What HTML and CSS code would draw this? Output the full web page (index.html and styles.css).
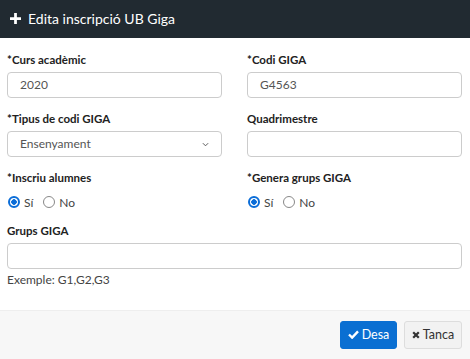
FILE: index.html
```html
<!DOCTYPE html>
<html>
  <head>
    <meta charset='utf-8'/>
    <link rel="stylesheet" href="styles.css">
  </head>
  <body>
    <div class='modal'>
      <div class='modal-header'>
        <svg class='icon-plus' viewBox='0 0 12 12' width='11' height='11'><path d='M4.5 0h3v4.5H12v3H7.5V12h-3V7.5H0v-3h4.5z' fill='#fff'/></svg>
        <span>Edita inscripció UB Giga</span>
      </div>

      <div class='modal-body'>
        <div class='row'>
          <div class='field'>
            <label>*Curs acadèmic</label>
            <div class='input'>2020</div>
          </div>
          <div class='field'>
            <label>*Codi GIGA</label>
            <div class='input'>G4563</div>
          </div>
        </div>

        <div class='row'>
          <div class='field'>
            <label>*Tipus de codi GIGA</label>
            <div class='input select'>
              <span>Ensenyament</span>
              <svg viewBox='0 0 8 5' width='7' height='5'><path d='M1 1l3 3 3-3' fill='none' stroke='#555' stroke-width='1.1'/></svg>
            </div>
          </div>
          <div class='field'>
            <label>Quadrimestre</label>
            <div class='input'></div>
          </div>
        </div>

        <div class='row'>
          <div class='field radio-field'>
            <label>*Inscriu alumnes</label>
            <div class='radios'>
              <span class='radio checked'></span><span class='radio-label'>Sí</span>
              <span class='radio'></span><span class='radio-label'>No</span>
            </div>
          </div>
          <div class='field radio-field'>
            <label>*Genera grups GIGA</label>
            <div class='radios'>
              <span class='radio checked'></span><span class='radio-label'>Sí</span>
              <span class='radio'></span><span class='radio-label'>No</span>
            </div>
          </div>
        </div>

        <div class='field full'>
          <label>Grups GIGA</label>
          <div class='input'></div>
          <div class='help'>Exemple: G1,G2,G3</div>
        </div>
      </div>

      <div class='modal-footer'>
        <button class='btn btn-primary'>
          <svg viewBox='0 0 12 10' width='11' height='9'><path d='M1 5l3.5 3.5L11 1.5' fill='none' stroke='#fff' stroke-width='2.6'/></svg>
          Desa
        </button>
        <button class='btn btn-default'>
          <svg viewBox='0 0 10 10' width='8' height='8'><path d='M1.5 1.5l7 7M8.5 1.5l-7 7' stroke='#333' stroke-width='2.8'/></svg>
          Tanca
        </button>
      </div>
    </div>
  </body>
</html>
```

FILE: styles.css
```css
* {
  box-sizing: border-box;
  font-family: 'Lato', sans-serif;
}

body {
  margin: 0;
  width: 470px;
  height: 359px;
  background: #fff;
  color: #333;
}

.modal {
  display: flex;
  flex-direction: column;
  height: 359px;
}

.modal-header {
  background: #212a31;
  color: #fff;
  height: 38px;
  display: flex;
  align-items: center;
  gap: 7px;
  padding: 0 10px 1px;
  font-size: 14px;
}

.modal-body {
  flex-grow: 1;
  padding: 14px 8px 0 7px;
}

.row {
  display: grid;
  grid-template-columns: 1fr 1fr;
  column-gap: 25px;
}

.field {
  margin-bottom: 13px;
}

.radio-field {
  margin-bottom: 9px;
}

label {
  display: block;
  font-weight: bold;
  font-size: 11.5px;
  line-height: 16px;
  margin-bottom: 4px;
  color: #222;
}

.input {
  height: 26px;
  border: 1px solid #ccc;
  border-radius: 4px;
  padding: 0 12px;
  font-size: 12px;
  line-height: 24px;
  color: #555;
}

.select {
  display: flex;
  justify-content: space-between;
  align-items: center;
}

.radios {
  display: flex;
  align-items: center;
  height: 24px;
  font-size: 12px;
  color: #444;
}

.radio {
  width: 12px;
  height: 12px;
  border: 1px solid #888;
  border-radius: 50%;
  margin: 0 4px 0 1px;
}

.radio.checked {
  border: 2px solid #0b6dd8;
  background: radial-gradient(#0b6dd8 2.5px, #fff 3px);
}

.radio-label {
  margin-right: 9px;
}

.help {
  font-size: 12px;
  line-height: 14px;
  color: #444;
  margin-top: 4px;
}

.modal-footer {
  height: 49px;
  background: #f7f7f7;
  border-top: 1px solid #eee;
  display: flex;
  justify-content: flex-end;
  align-items: center;
  gap: 7px;
  padding: 0 8px 1px;
}

.btn {
  height: 28px;
  border-radius: 3px;
  font-size: 12.5px;
  padding: 0;
  display: flex;
  align-items: center;
  justify-content: center;
  gap: 3px;
}

.btn-primary {
  width: 57px;
  background: #0a6fd2;
  border: 1px solid #0a6fd2;
  color: #fff;
}

.btn-default {
  width: 58px;
  background: #f2f2f2;
  border: 1px solid #ddd;
  color: #333;
}
```
